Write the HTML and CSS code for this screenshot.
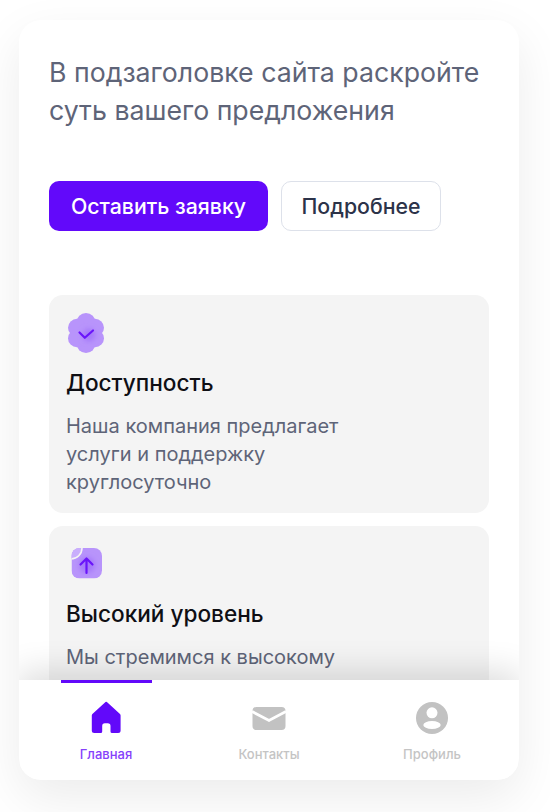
FILE: index.html
```html
<!DOCTYPE html>
<html lang="ru">
<head>
<meta charset="utf-8">
<title>Главная</title>
<link rel="stylesheet" href="styles.css">
</head>
<body>
<div class="phone">
  <main class="content">
    <p class="lead">В подзаголовке сайта раскройте суть вашего предложения</p>
    <div class="actions">
      <a class="btn btn-primary">Оставить заявку</a>
      <a class="btn btn-secondary">Подробнее</a>
    </div>
    <section class="features">
      <article class="feature">
        <svg class="feature-icon" width="40" height="40" viewBox="0 0 40 40">
          <defs><filter id="blur1" x="-50%" y="-50%" width="200%" height="200%"><feGaussianBlur stdDeviation="2.6"/></filter></defs>
          <g fill="#b894fb">
            <circle cx="20" cy="20" r="15"/>
            <circle cx="20" cy="9.500" r="9.500"/>
            <circle cx="20" cy="30.500" r="9.500"/>
            <circle cx="11" cy="14.750" r="9"/>
            <circle cx="29" cy="14.750" r="9"/>
            <circle cx="11" cy="25.250" r="9"/>
            <circle cx="29" cy="25.250" r="9"/>
          </g>
          <circle cx="23" cy="22" r="6.500" fill="#a67af9" filter="url(#blur1)"/>
          <path fill="none" stroke="#6a14fa" stroke-width="2.200" stroke-linecap="round" stroke-linejoin="round" d="M13.500 19.500l5.300 5.300 8.200-7.300"/>
        </svg>
        <h2 class="feature-title">Доступность</h2>
        <p class="feature-text">Наша компания предлагает<br>услуги и поддержку<br>круглосуточно</p>
      </article>
      <article class="feature">
        <svg class="feature-icon" width="40" height="40" viewBox="0 0 40 40">
          <defs>
            <filter id="blur2" x="-50%" y="-50%" width="200%" height="200%"><feGaussianBlur stdDeviation="2.600"/></filter>
            <clipPath id="tile"><rect x="5.500" y="4" width="30.500" height="30.500" rx="8"/></clipPath>
          </defs>
          <g clip-path="url(#tile)">
            <rect x="5.500" y="4" width="30.500" height="30.500" fill="#b894fb"/>
            <circle cx="21" cy="21" r="8" fill="#a67af9" filter="url(#blur2)"/>
            <circle cx="5" cy="4" r="11" fill="#c9aefc" stroke="#f4f4f4" stroke-width="1.600"/>
          </g>
          <path fill="none" stroke="#6a14fa" stroke-width="2.200" stroke-linecap="round" stroke-linejoin="round" d="M20.500 29V14.500M14.500 20.500l6-6 6 6"/>
        </svg>
        <h2 class="feature-title">Высокий уровень</h2>
        <p class="feature-text">Мы стремимся к высокому</p>
      </article>
    </section>
  </main>
  <nav class="tabbar">
    <a class="tab tab-active">
      <svg width="34" height="34" viewBox="0 0 34 34"><path fill="#6209fa" d="M16.500 1.100q.7-.6 1.400 0L31 13q.6.600.6 1.500V29.500q0 2.500-2.500 2.500H23q-1.500 0-1.500-1.500V25q0-2.700-2.700-2.700h-3q-2.600 0-2.600 2.700v5.500q0 1.500-1.500 1.500H5.300q-2.500 0-2.500-2.500V14.500q0-.9.600-1.500z"/></svg>
      <span>Главная</span>
    </a>
    <a class="tab">
      <svg width="34" height="34" viewBox="0 0 34 34"><rect x=".5" y="6" width="33" height="23" rx="4" fill="#c2c2c2"/><path fill="none" stroke="#fff" stroke-width="2.800" d="M0 10.500l17 9 17-9"/></svg>
      <span>Контакты</span>
    </a>
    <a class="tab">
      <svg width="34" height="34" viewBox="0 0 34 34"><circle cx="17" cy="17" r="16" fill="#c2c2c2"/><circle cx="17" cy="11.800" r="5.500" fill="#fff"/><ellipse cx="17" cy="24" rx="8.700" ry="4" fill="#fff"/></svg>
      <span>Профиль</span>
    </a>
  </nav>
</div>
</body>
</html>
```
FILE: styles.css
```css
* { box-sizing: border-box; }

html, body {
  margin: 0;
  height: 100%;
  background: #fff;
  overflow: hidden;
}

body {
  padding: 20px 31px 32px 19px;
  font-family: Inter, "Liberation Sans", sans-serif;
}

.phone {
  display: flex;
  flex-direction: column;
  height: 760px;
  background: #fff;
  border-radius: 22px;
  overflow: hidden;
  box-shadow: 0 18px 50px rgba(0, 0, 0, .08);
}

.content {
  flex: 1;
  min-height: 0;
  overflow: hidden;
  padding: 33px 30px 0 30px;
}

.lead {
  margin: 0;
  font-size: 26.7px;
  line-height: 38px;
  font-weight: 400;
  color: #5e6478;
}

.actions {
  display: flex;
  gap: 13px;
  margin-top: 52px;
}

.btn {
  display: flex;
  align-items: center;
  justify-content: center;
  height: 50px;
  border-radius: 10px;
  font-size: 21.3px;
  font-weight: 500;
}

.btn-primary {
  width: 219px;
  background: #6209fa;
  color: #fff;
}

.btn-secondary {
  width: 160px;
  border: 1px solid #dde1ea;
  color: #2c3349;
  background: #fff;
}

.features {
  display: flex;
  flex-direction: column;
  gap: 13px;
  margin-top: 64px;
}

.feature {
  flex: none;
  padding: 18px 17px 19px;
  height: 218px;
  background: #f4f4f4;
  border-radius: 14px;
}

.feature-icon { display: block; }

.feature-title {
  margin: 14px 0 0;
  font-size: 22.6px;
  line-height: 32px;
  font-weight: 500;
  color: #0f0f14;
}

.feature-text {
  margin: 13px 0 0;
  font-size: 20px;
  line-height: 28px;
  color: #5e6478;
}

.tabbar {
  position: relative;
  flex: none;
  display: grid;
  grid-template-columns: repeat(3, 1fr);
  height: 100px;
  padding: 0 5.5px;
  background: #fff;
  box-shadow: 0 -8px 32px rgba(0, 0, 0, .14);
}

.tab {
  display: flex;
  flex-direction: column;
  align-items: center;
  gap: 11px;
  padding-top: 21px;
  font-size: 13px;
  line-height: 16px;
  font-weight: 500;
  color: #c4c4c4;
}

.tab svg { display: block; }

.tab-active {
  color: #8540fb;
  position: relative;
}

.tab-active::before {
  content: "";
  position: absolute;
  top: 0;
  left: 36.5px;
  width: 91px;
  height: 3px;
  background: #6209fa;
}
```
